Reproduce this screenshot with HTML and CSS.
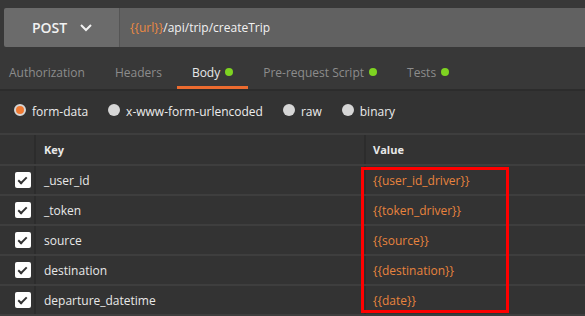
FILE: index.html
```html
<!DOCTYPE html>
<html lang="en">

<head>
    <meta charset="UTF-8">
    <title>Request Builder</title>
    <link rel="stylesheet" href="styles.css">
</head>

<body>
    <div class="builder">
        <!-- URL bar -->
        <div class="url-bar">
            <div class="method">
                <span>POST</span>
                <svg class="chevron" viewBox="0 0 14 10">
                    <polyline points="2,2 7,7 12,2" />
                </svg>
            </div>
            <div class="url-input"><span class="var">{{url}}</span>/api/trip/createTrip</div>
        </div>

        <!-- Tabs -->
        <div class="tabs">
            <div class="tab">Authorization</div>
            <div class="tab">Headers</div>
            <div class="tab active">Body <i class="dot"></i></div>
            <div class="tab">Pre-request Script <i class="dot"></i></div>
            <div class="tab">Tests <i class="dot"></i></div>
        </div>

        <!-- Body modes -->
        <div class="modes">
            <label class="mode"><i class="radio checked"></i>form-data</label>
            <label class="mode"><i class="radio"></i>x-www-form-urlencoded</label>
            <label class="mode"><i class="radio"></i>raw</label>
            <label class="mode"><i class="radio"></i>binary</label>
        </div>

        <!-- Params table -->
        <div class="params">
            <div class="row head">
                <div class="cell check"></div>
                <div class="cell key">Key</div>
                <div class="cell value">Value</div>
            </div>
            <div class="row">
                <div class="cell check"><span class="box"></span></div>
                <div class="cell key">_user_id</div>
                <div class="cell value">{{user_id_driver}}</div>
            </div>
            <div class="row">
                <div class="cell check"><span class="box"></span></div>
                <div class="cell key">_token</div>
                <div class="cell value">{{token_driver}}</div>
            </div>
            <div class="row">
                <div class="cell check"><span class="box"></span></div>
                <div class="cell key">source</div>
                <div class="cell value">{{source}}</div>
            </div>
            <div class="row">
                <div class="cell check"><span class="box"></span></div>
                <div class="cell key">destination</div>
                <div class="cell value">{{destination}}</div>
            </div>
            <div class="row">
                <div class="cell check"><span class="box"></span></div>
                <div class="cell key">departure_datetime</div>
                <div class="cell value">{{date}}</div>
            </div>

            <!-- annotation -->
            <div class="highlight"></div>
        </div>
    </div>
</body>

</html>
```

FILE: styles.css
```css
body {
    margin: 0;
    background: #333;
    font-family: "Open Sans", "Liberation Sans", sans-serif;
    color: #e8e8e8;
}

.builder {
    width: 585px;
    height: 316px;
    overflow: hidden;
}

/* URL bar */
.url-bar {
    display: flex;
    height: 39px;
    padding: 8px 0 0 4px;
    background: #383838;
}

.method {
    width: 116px;
    display: flex;
    align-items: center;
    justify-content: center;
    gap: 12px;
    background: #6b6b6b;
    border-radius: 2px 0 0 2px;
    border-right: 1px solid #555;
    box-sizing: border-box;
    font-size: 14px;
    font-weight: 600;
    color: #f2f2f2;
    padding-left: 2px;
}

.chevron {
    width: 14px;
    height: 10px;
    fill: none;
    stroke: #f2f2f2;
    stroke-width: 2px;
}

.url-input {
    flex: 1;
    display: flex;
    align-items: center;
    padding-left: 10px;
    background: #616161;
    font-size: 12px;
    color: #f2f2f2;
}

.var {
    color: #ec8a43;
}

/* Tabs */
.tabs {
    display: flex;
    height: 42px;
    padding-left: 9px;
    gap: 30px;
    background: #383838;
    border-bottom: 2px solid #2c2c2c;
}

.tab {
    display: flex;
    align-items: center;
    gap: 5px;
    font-size: 12px;
    color: #8c8c8c;
    border-bottom: 3px solid transparent;
    padding-top: 11px;
}

.tab.active {
    color: #e8e8e8;
    border-bottom-color: #ec6b2f;
    padding: 11px 15px 0 15px;
    margin: 0 -15px;
}

.dot {
    width: 8px;
    height: 8px;
    border-radius: 50%;
    background: #7ed321;
}

/* Body modes */
.modes {
    display: flex;
    align-items: center;
    height: 44px;
    padding: 0 0 2px 14px;
    box-sizing: border-box;
    gap: 20px;
    border-bottom: 2px solid #3e3e3e;
}

.mode {
    display: flex;
    align-items: center;
    gap: 6px;
    font-size: 12px;
    color: #ececec;
}

.radio {
    width: 12px;
    height: 12px;
    border-radius: 50%;
    background: #d6d6d6;
    box-sizing: border-box;
    margin-top: -3px;
}

.radio.checked {
    background: #f07a33;
    border: 2px solid #d6d6d6;
}

/* Params table */
.params {
    position: relative;
}

.row {
    display: flex;
    height: 28px;
    border-bottom: 2px solid #3e3e3e;
}

.row.head {
    height: 29px;
}

.cell {
    display: flex;
    align-items: center;
    font-size: 12px;
}

.check {
    width: 36px;
    padding-left: 15px;
    box-sizing: border-box;
    border-right: 2px solid #2c2c2c;
}

.key {
    width: 330px;
    padding-left: 8px;
    box-sizing: border-box;
    border-right: 2px solid #2c2c2c;
}

.value {
    flex: 1;
    padding-left: 7px;
    color: #e8833e;
}

.head .cell {
    font-size: 11px;
    font-weight: 700;
    color: #e8e8e8;
}

.box {
    width: 16px;
    height: 16px;
    border-radius: 2px;
    background: #fff;
    position: relative;
}

.box::after {
    content: "";
    position: absolute;
    left: 5px;
    top: 3px;
    width: 3px;
    height: 7px;
    border: solid #333;
    border-width: 0 2px 2px 0;
    transform: rotate(45deg);
}

.highlight {
    position: absolute;
    left: 361px;
    top: 32px;
    width: 148px;
    height: 146px;
    border: 3px solid #f00;
    box-sizing: border-box;
}
```
